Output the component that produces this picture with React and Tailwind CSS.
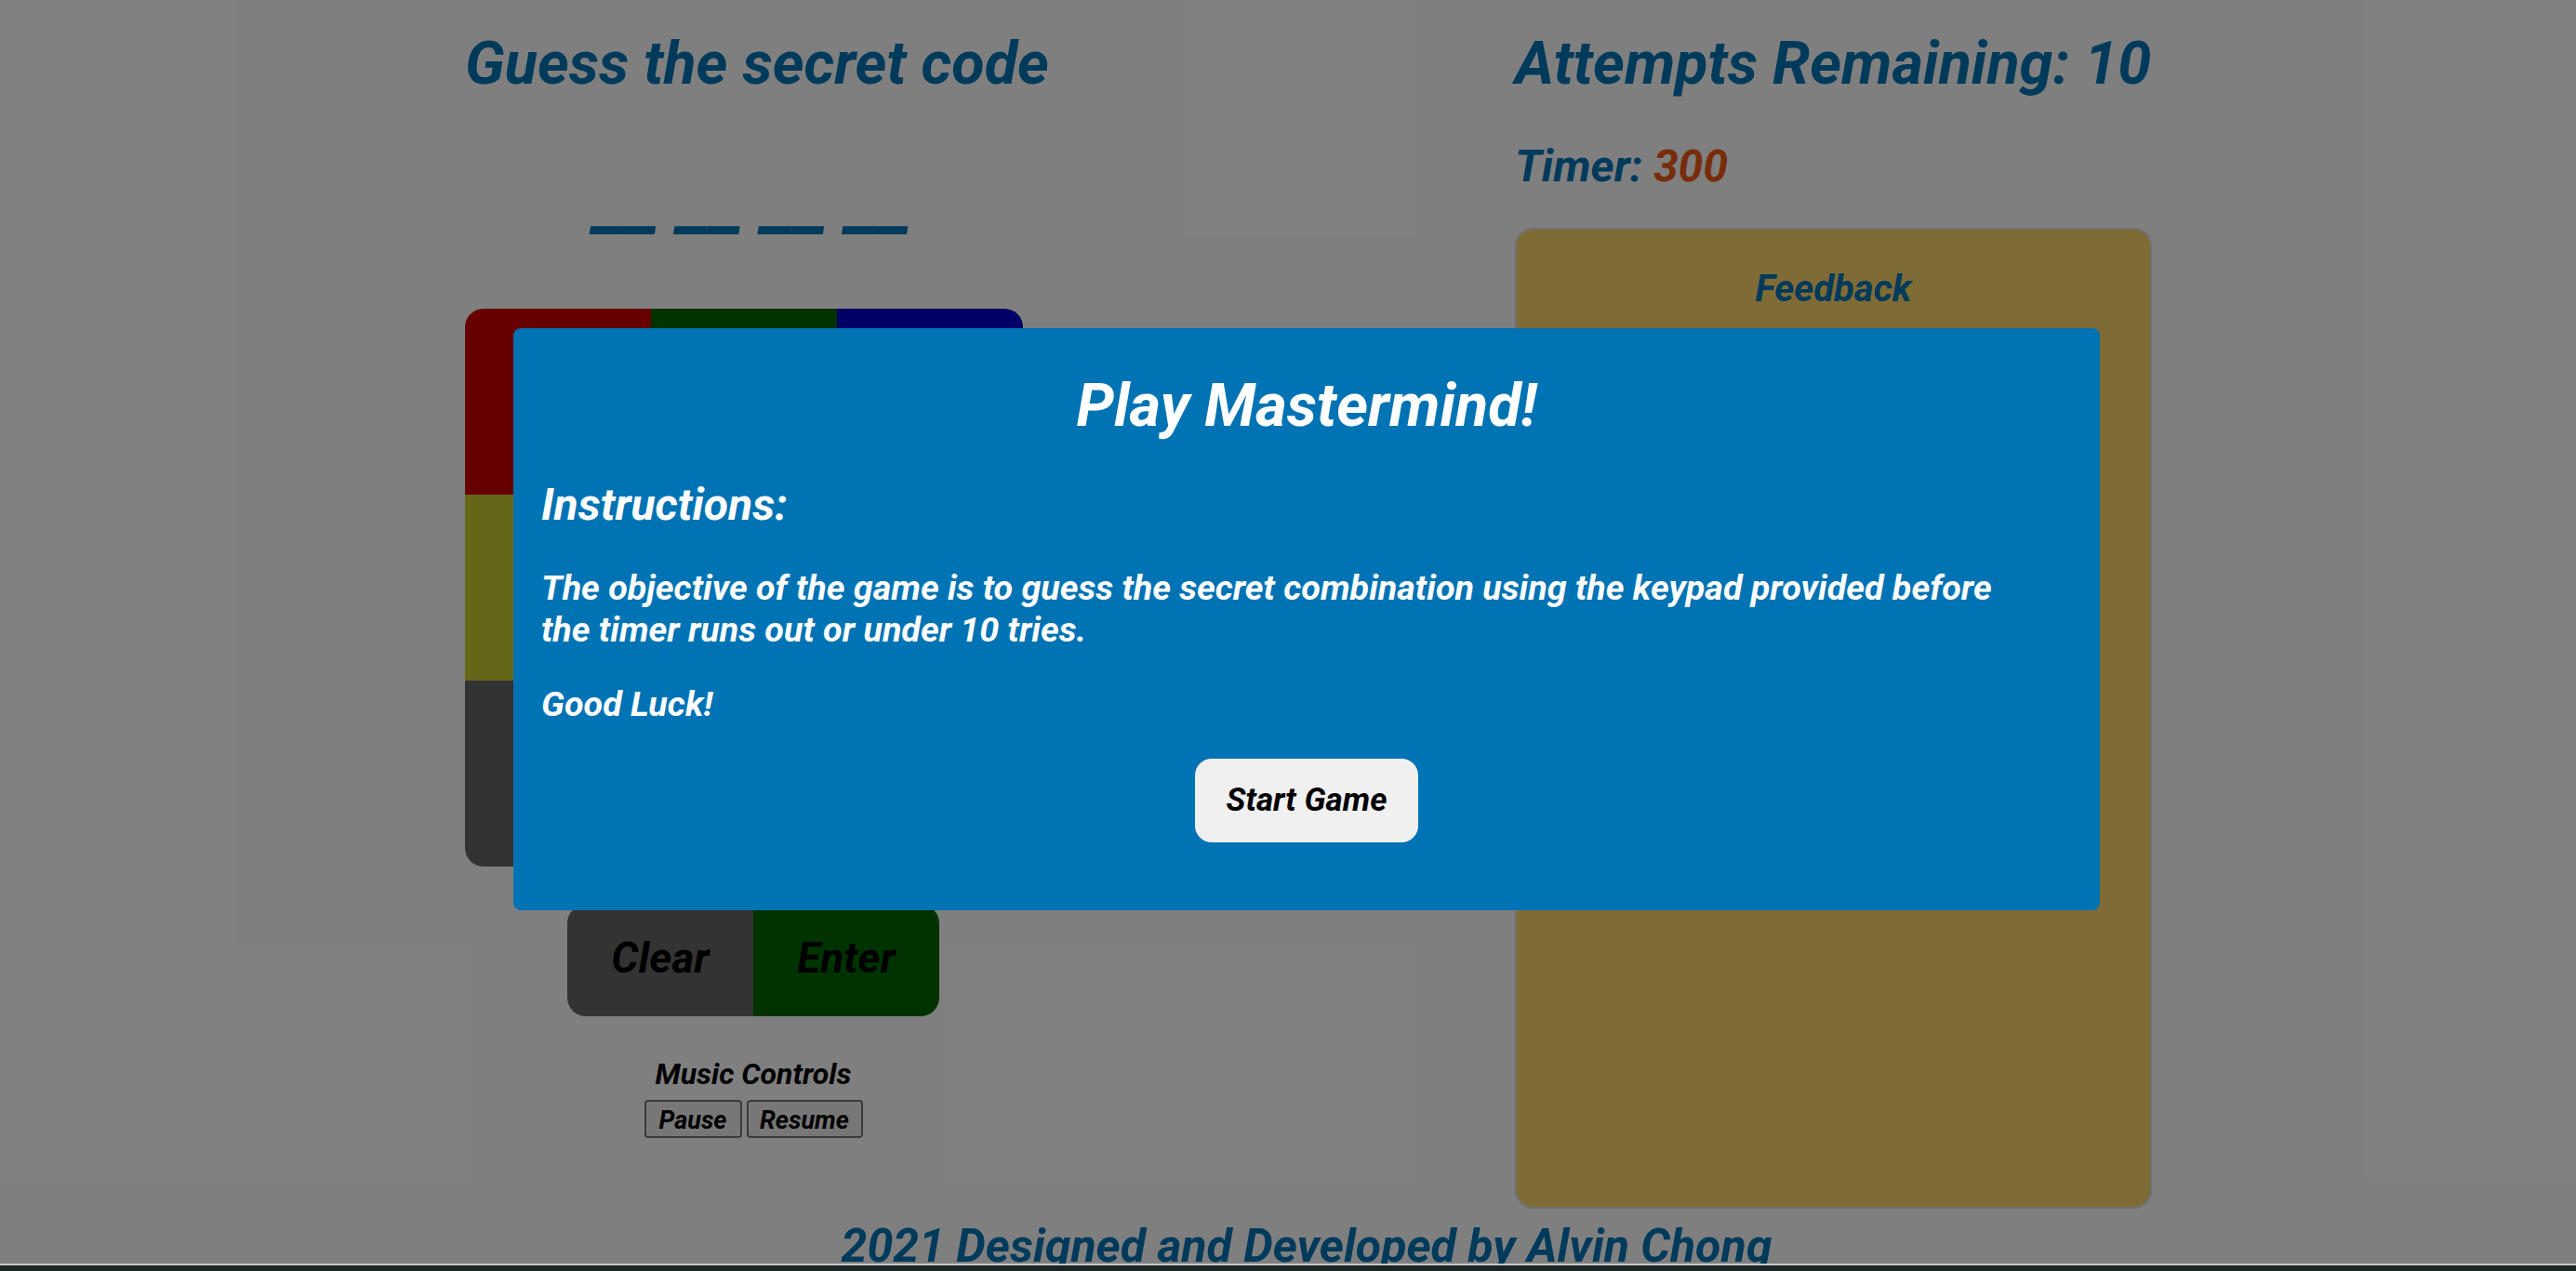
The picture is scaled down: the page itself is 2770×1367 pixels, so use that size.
import React from 'react';

const keypad = [
    'bg-[#cc0000]', 'bg-[#006600]', 'bg-[#0000cc]',
    'bg-[#cccc33]', 'bg-[#cc6600]', 'bg-[#660099]',
    'bg-[#666666]', 'bg-[#ffffff]', 'bg-[#00cccc]',
];

// Mastermind board with the start dialog open
export default function App() {
    return (
        <div className="w-[2770px] h-[1367px] flex flex-col overflow-hidden italic font-bold" style={{ fontFamily: 'Roboto, "Noto Sans", sans-serif' }}>
            <div className="relative h-[1359px] overflow-hidden bg-white">
                <main className="flex pl-[500px] gap-[509px]">
                    {/* left: secret code and keypad */}
                    <section className="w-[620px] flex flex-col items-center">
                        <h1 className="self-start mt-[35.5px] text-[64.7px] leading-none whitespace-nowrap text-[#0074b7]">Guess the secret code</h1>
                        <div className="mt-[75px] text-[81.5px] leading-none text-[#0074b7] whitespace-pre">__ __ __ __</div>
                        <div className="self-start mt-[75.5px] w-[600px] h-[600px] grid grid-cols-3 rounded-[20px] overflow-hidden">
                            {keypad.map((c, i) => (
                                <button key={i} className={c}></button>
                            ))}
                        </div>
                        <div className="mt-[41px] w-[400px] h-[120px] flex rounded-[20px] overflow-hidden text-[46px] text-black">
                            <button className="flex-1 pb-[6px] bg-[#666666] italic font-bold">Clear</button>
                            <button className="flex-1 pb-[6px] bg-[#006600] italic font-bold">Enter</button>
                        </div>
                        <p className="mt-[46px] text-[32px] leading-none text-black">Music Controls</p>
                        <div className="mt-[12px] flex gap-[5px]">
                            <button className="w-[105px] h-[41px] border-2 border-[#767676] rounded-[4px] bg-[#efefef] text-[27px] italic font-bold text-black">Pause</button>
                            <button className="w-[125px] h-[41px] border-2 border-[#767676] rounded-[4px] bg-[#efefef] text-[27px] italic font-bold text-black">Resume</button>
                        </div>
                    </section>

                    {/* right: attempts, timer, feedback */}
                    <section className="w-[685px] flex flex-col">
                        <h1 className="mt-[35.5px] text-[64.7px] leading-none whitespace-nowrap text-[#0074b7]">Attempts Remaining: 10</h1>
                        <h2 className="mt-[54.5px] text-[48px] leading-none text-[#0074b7]">
                            Timer: <span className="text-[#f05a14]">300</span>
                        </h2>
                        <div className="mt-[42px] h-[1055px] rounded-[20px] border-2 border-[#e0e0e0] bg-[#ffd66b] pt-[44px] text-center">
                            <h3 className="text-[40px] leading-none text-[#0074b7]">Feedback</h3>
                        </div>
                    </section>
                </main>

                <footer className="mt-[15px] pl-[40px] text-center text-[50px] leading-none whitespace-nowrap text-[#0074b7]">
                    2021 Designed and Developed by Alvin Chong
                </footer>

                {/* overlay + modal */}
                <div className="absolute inset-0 bg-black/50"></div>
                <div className="absolute left-[552px] top-[353px] w-[1706px] h-[626px] rounded-[8px] bg-[#0073b4] text-white px-[30px] pt-[50.5px] flex flex-col">
                    <h1 className="text-center text-[64.7px] leading-none">Play Mastermind!</h1>
                    <h2 className="mt-[51px] text-[48px] leading-none">Instructions:</h2>
                    <p className="mt-[43px] w-[1600px] text-[37.7px] leading-[45px]">
                        The objective of the game is to guess the secret combination using the keypad provided before the timer runs out or under 10 tries.
                    </p>
                    <p className="mt-[35px] text-[37.7px] leading-[45px]">Good Luck!</p>
                    <button className="self-center mt-[36px] w-[240px] h-[90px] rounded-[18px] bg-[#f0f0f0] text-black text-[35px] italic font-bold">Start Game</button>
                </div>
            </div>
            <div className="h-[2px] bg-[#c8c8c8]"></div>
            <div className="flex-1 bg-[#1d2626]"></div>
        </div>
    );
}
